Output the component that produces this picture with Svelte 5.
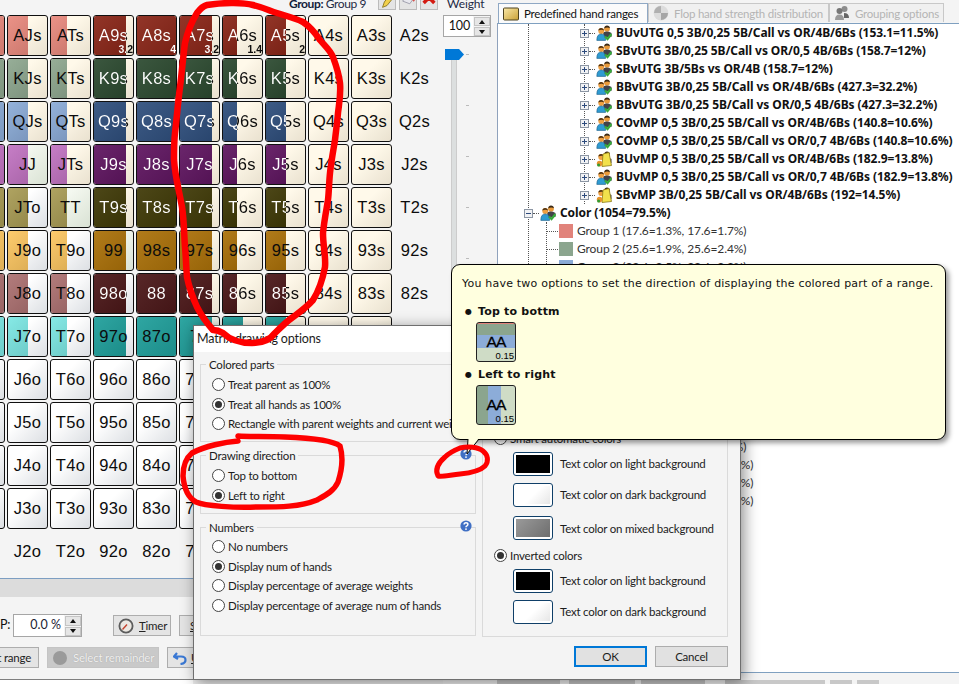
<script>
  const cols = ['Q','J','T','9','8','7','6','5','4','3','2'];
  const rows = ['A','K','Q','J','T','9','8','7','6','5','4','3','2'];
  const order = ['A','K','Q','J','T','9','8','7','6','5','4','3','2'];
  const rowColor = {
    A: ['#e98a7e', '#8a2618'],
    K: ['#8fa890', '#2c4a30'],
    Q: ['#8cacd8', '#2f4f7d'],
    J: ['#c274c2', '#5f1560'],
    T: ['#a99c55', '#3f3906'],
    '9': ['#fdc762', '#ab7109'],
    '8': ['#ad7272', '#4b1718'],
    '7': ['#7de8e4', '#1f9f9b']
  };
  const colWidth = { Q: 41, J: 20, T: 16, '9': 32, '8': 41, '7': 32, '6': 14, '5': 20, '4': 0, '3': 0, '2': 0 };
  const subs = { A9: '3.2', A8: '4', A7: '3.2', A6: '1.4', A5: '2' };

  function cellOf(r, c) {
    const ri = order.indexOf(r), ci = order.indexOf(c);
    const label = c === 'Q' ? '' : ri === ci ? r + c : ri < ci ? r + c + 's' : c + r + 'o';
    const kind = ri === ci ? 'pair' : ri < ci ? 'suited' : 'off';
    const tone = rowColor[r];
    let width = tone ? colWidth[c] : 0;
    if (r === '7' && c === '6') width = 20;
    const darkCol = ['9', '8', '7', '6', '5'].includes(c);
    const color = tone ? (darkCol ? tone[1] : tone[0]) : null;
    const split = color && darkCol && r !== '9' && r !== '7';
    return { label, kind, width, color, split, sub: subs[r + c], plain: r === '2' || c === '2' };
  }
  const cells = rows.flatMap((r) => cols.map((c) => cellOf(r, c)));

  const tree = [
    ['BUvUTG 0,5 3B/0,25 5B/Call vs OR/4B/6Bs (153.1=11.5%)', 0],
    ['SBvUTG 3B/0,25 5B/Call vs OR/0,5 4B/6Bs (158.7=12%)', 0],
    ['SBvUTG 3B/5Bs vs OR/4B (158.7=12%)', 0],
    ['BBvUTG 3B/0,25 5B/Call vs OR/4B/6Bs (427.3=32.2%)', 0],
    ['BBvUTG 3B/0,25 5B/Call vs OR/0,5 4B/6Bs (427.3=32.2%)', 0],
    ['COvMP 0,5 3B/0,25 5B/Call vs OR/4B/6Bs (140.8=10.6%)', 0],
    ['COvMP 0,5 3B/0,25 5B/Call vs OR/0,7 4B/6Bs (140.8=10.6%)', 0],
    ['BUvMP 0,5 3B/0,25 5B/Call vs OR/4B/6Bs (182.9=13.8%)', 1],
    ['BUvMP 0,5 3B/0,25 5B/Call vs OR/0,7 4B/6Bs (182.9=13.8%)', 0],
    ['SBvMP 3B/0,25 5B/Call vs OR/4B/6Bs (192=14.5%)', 1]
  ];
  const groups = [
    ['Group 1 (17.6=1.3%, 17.6=1.7%)', '#e1837b'],
    ['Group 2 (25.6=1.9%, 25.6=2.4%)', '#8ba58e'],
    ['Group 3 (33.6=2.5%, 33.6=3.2%)', '#8cacd8']
  ];
  const tails = ['Group 9 (17.6=1.3%, 17.6=1.7%)', 'Group 10 (25.6=1.9%, 25.6=2.4%)', 'Group 11 (33.6=2.5%, 33.6=3.2%)', 'Group 12 (48.6=3.7%, 48.6=4.6%)'];
  const ticks = [0, 1, 2, 3, 4, 5, 6, 7, 8, 9];
</script>

{#snippet people(yellow)}
  <svg class="ticon" viewBox="0 0 16 16">
    <circle cx="11" cy="3.8" r="2.9" fill="#e99a3a" />
    <path d="M8.2 3.4 Q8.6 .6 11 .6 Q13.6 .6 13.9 3.2 Q11 1.8 8.2 3.4Z" fill="#3a2a18" />
    <path d="M7 7.5 Q11 5.5 15.5 8 L15.5 12 L8 12Z" fill="#43434a" />
    <circle cx="5.2" cy="6" r="2.9" fill="#f0a040" />
    <path d="M2.3 5.6 Q2.6 2.9 5.2 2.9 Q7.8 2.9 8.1 5.4 Q5.2 4.2 2.3 5.6Z" fill="#4a3014" />
    {#if yellow}
      <path d="M7 3 L13 1.5 L15.5 14.5 L6 15.5Z" fill="#f2e14c" stroke="#8c7a18" stroke-width=".8" />
      <circle cx="3.6" cy="12.6" r="2.8" fill="#e8942c" />
      <circle cx="2.6" cy="14" r="1.5" fill="#2e9c34" />
    {:else}
      <path d="M.8 15.4 Q.8 9 5.2 9 Q9.6 9 9.6 15.4Z" fill="#2f9bd2" stroke="#1d5d86" stroke-width=".6" />
      <path d="M9 11.5 L11.5 14 L15.5 9" fill="none" stroke="#39a83c" stroke-width="2.2" />
    {/if}
  </svg>
{/snippet}

{#snippet expander(minus)}
  <span class="exp" class:minus></span>
{/snippet}

{#snippet radio(label, on)}
  <div class="radio"><span class="dot" class:on></span><span>{label}</span></div>
{/snippet}

{#snippet help()}
  <svg class="help" viewBox="0 0 12 12">
    <circle cx="6" cy="6" r="5.6" fill="#3f6fc4" />
    <path d="M4.1 4.6 Q4.1 2.7 6 2.7 Q7.9 2.7 7.9 4.3 Q7.9 5.2 6.9 5.8 Q6 6.3 6 7.2" fill="none" stroke="#fff" stroke-width="1.5" />
    <circle cx="6" cy="9.1" r=".95" fill="#fff" />
  </svg>
{/snippet}

{#snippet swatch(kind)}
  <span class="swatch {kind}"><i></i></span>
{/snippet}

{#snippet colorRow(kind, label)}
  <div class="colorrow">{@render swatch(kind)}<span>{label}</span></div>
{/snippet}

<div class="screen">
  <div class="main">
    <section class="left">
      <div class="toolbar">
        <span class="group"><b>Group:</b> Group 9</span>
        <span class="tbtn">
          <svg viewBox="0 0 18 18"><path d="M4 15 L6 9 L13 0 L17 3 L9 13Z" fill="#f1d04c" stroke="#8a7420" /></svg>
        </span>
        <span class="tbtn">
          <svg viewBox="0 0 18 18"><path d="M3 8 L9 0 L16 4 L11 11Z" fill="#e8e8ee" stroke="#9a9aa8" /><path d="M10 0 L16 8" stroke="#d8524e" stroke-width="2" /></svg>
        </span>
        <span class="tbtn">
          <svg viewBox="0 0 18 18"><path d="M3 -2 L15 10 M15 -2 L3 10" stroke="#d31b12" stroke-width="4" /></svg>
        </span>
      </div>

      <div class="matrix">
        {#each cells as cell}
          <div class="cell {cell.kind}" class:plain={cell.plain}>
            {#if cell.width && !cell.plain}
              <span class="fill" style="width:{cell.width}px;background-color:{cell.color}"></span>
            {/if}
            <span class="name" class:split={cell.split} style={cell.split ? `--w:${cell.width}px` : undefined}>{cell.label}</span>
            {#if cell.sub}<span class="sub split" style="--w:{cell.width}px">{cell.sub}</span>{/if}
          </div>
        {/each}
      </div>

      <div class="band"></div>

      <div class="controls">
        <div class="ctlrow first">
          <span class="plabel">P:</span>
          <span class="spin pct">
            <span class="val">0.0 %</span>
            <span class="arrows"><i class="up"></i><i class="down"></i></span>
          </span>
          <span class="btn timer">
            <svg viewBox="0 0 16 16"><circle cx="8" cy="8" r="6.6" fill="#ece8e2" stroke="#5c5c5c" stroke-width="1.8" /><path d="M4.5 11.5 L9 6.5" stroke="#c4432e" stroke-width="1.4" /></svg>
            <span><u>T</u>imer</span>
          </span>
          <span class="btn next"><u>S</u>ave</span>
        </div>
        <div class="ctlrow second">
          <span class="btn range">Select range</span>
          <span class="btn remainder"><i class="disc"></i><span>Select remainder</span></span>
          <span class="btn undo">
            <svg viewBox="0 0 14 14"><path d="M4 2 L1 5.5 L5 8 M2 5.5 H8 Q12.5 5.5 12.5 9 Q12.5 12.5 7.5 13" fill="none" stroke="#3a78d4" stroke-width="2.2" /></svg>
            <span><u>U</u>ndo</span>
          </span>
        </div>
      </div>
      <div class="foot"></div>
    </section>

    <section class="weight">
      <div class="wlabel">Weight</div>
      <span class="spin wspin">
        <span class="val">100</span>
        <span class="arrows"><i class="up"></i><i class="down"></i></span>
      </span>
      <div class="slider">
        <span class="track"></span>
        <svg class="thumb" viewBox="0 0 19 11"><path d="M0 0 H14 L19 5.5 L14 11 H0Z" fill="#0078d7" /></svg>
        <div class="ticks">
          {#each ticks as t}<i></i>{/each}
        </div>
      </div>
    </section>

    <section class="right">
      <div class="tabs">
        <div class="tab active">
          <svg class="tabicon" viewBox="0 0 16 16"><defs><linearGradient id="fold" x1="0" y1="0" x2="1" y2="1"><stop offset="0" stop-color="#fbe9a8" /><stop offset="1" stop-color="#c9a036" /></linearGradient></defs><rect x=".5" y="2" width="15" height="12" rx="1" fill="url(#fold)" stroke="#4d4220" /></svg>
          Predefined hand ranges
        </div>
        <div class="tab flop">
          <svg class="tabicon" viewBox="0 0 16 16"><circle cx="8" cy="8" r="7.4" fill="#dcdcdc" /><path d="M8 8 L8 1 A7 7 0 0 0 1 8Z" fill="#b0b0b0" /><path d="M8 8 L15 8 A7 7 0 0 1 8 15Z" fill="#a6a6a6" /></svg>
          Flop hand strength distribution
        </div>
        <div class="tab grouping">
          <svg class="tabicon" viewBox="0 0 16 16"><circle cx="10.5" cy="4" r="3" fill="#8c8c8c" /><circle cx="5.5" cy="6" r="3" fill="#777" /><path d="M1 15 Q1 9.5 5.5 9.5 Q10 9.5 10 15Z" fill="#9a9a9a" /><path d="M10 8 Q15 8 15 13 H10Z" fill="#666" /></svg>
          Grouping options
        </div>
      </div>
      <div class="tree">
        <span class="guide g1"></span>
        <span class="guide g2"></span>
        <span class="guide g3"></span>
        {#each tree as [text, yellow]}
          <div class="row lvl3">
            {@render expander(false)}<i class="dash"></i>
            {@render people(yellow === 1)}
            <b>{text}</b>
          </div>
        {/each}
        <div class="row lvl2">
          {@render expander(true)}<i class="dash"></i>
          {@render people(false)}
          <b>Color (1054=79.5%)</b>
        </div>
        {#each groups as [text, color]}
          <div class="row lvl4">
            <i class="dash long"></i>
            <span class="gsw" style="background:{color}"></span>
            <span>{text}</span>
          </div>
        {/each}
        <div class="gap"></div>
        {#each tails as text}
          <div class="row lvl4">
            <i class="dash long"></i>
            <span class="gsw neutral"></span>
            <span>{text}</span>
          </div>
        {/each}
      </div>
      <div class="strip">
        <i></i><i></i><i></i><i></i><i></i><i></i>
      </div>
    </section>
  </div>

  <div class="dialog">
    <div class="title">Matrix drawing options</div>
    <div class="body">
      <div class="columns">
        <div class="col">
          <fieldset class="fs a">
            <legend>Colored parts</legend>
            {@render radio('Treat parent as 100%', false)}
            {@render radio('Treat all hands as 100%', true)}
            {@render radio('Rectangle with parent weights and current weights', false)}
          </fieldset>
          <fieldset class="fs b">
            <legend>Drawing direction</legend>
            <span class="hspot">{@render help()}</span>
            {@render radio('Top to bottom', false)}
            {@render radio('Left to right', true)}
          </fieldset>
          <fieldset class="fs c">
            <legend>Numbers</legend>
            <span class="hspot">{@render help()}</span>
            {@render radio('No numbers', false)}
            {@render radio('Display num of hands', true)}
            {@render radio('Display percentage of average weights', false)}
            {@render radio('Display percentage of average num of hands', false)}
          </fieldset>
        </div>
        <fieldset class="fs colors">
          {@render radio('Smart automatic colors', false)}
          <div class="swrows">
            {@render colorRow('black', 'Text color on light background')}
            {@render colorRow('whitesw', 'Text color on dark background')}
            {@render colorRow('graysw', 'Text color on mixed background')}
          </div>
          {@render radio('Inverted colors', true)}
          <div class="swrows two">
            {@render colorRow('black', 'Text color on light background')}
            {@render colorRow('whitesw', 'Text color on dark background')}
          </div>
        </fieldset>
      </div>
      <div class="actions">
        <span class="dbtn ok">OK</span>
        <span class="dbtn">Cancel</span>
      </div>
    </div>
  </div>

  <div class="tip">
    <p>You have two options to set the direction of displaying the colored part of a range.</p>
    <div class="bullet"><span>●</span><b>Top to bottm</b></div>
    <div class="sample vertical"><em>AA</em><small>0.15</small></div>
    <div class="bullet second"><span>●</span><b>Left to right</b></div>
    <div class="sample horizontal"><em>AA</em><small>0.15</small></div>
    <svg class="tail" viewBox="0 0 16 18">
      <path d="M13 0 L1 16 L2 0Z" fill="#ffffdf" />
      <path d="M2 1 L1 16 L13 1" fill="none" stroke="#000" />
    </svg>
  </div>

  <svg class="scribble" viewBox="0 0 959 684">
    <path d="M207 5 C225 2 245 3 253 5 C265 8 270 11 277 13 C290 17 297 19 303 22 C312 28 316 34 320 40 C326 47 330 50 333 57 C337 68 339 74 340 83 C341 95 339 104 338 113 C337 124 336 131 335 140 C333 152 331 163 330 173 C329 183 329 191 328 200 C326 212 324 222 323 233 C323 246 326 256 325 267 C322 283 318 292 313 300 C306 308 300 312 293 317 C286 322 283 325 275 333 C270 340 262 343 252 343 C240 343 230 340 223 333 C218 330 216 330 213 330 C206 322 201 315 197 307 C192 296 189 287 187 277 C186 266 186 257 185 247 C184 232 184 220 182 207 C179 190 175 176 174 160 C174 150 174 142 175 133 C177 116 178 102 180 87 C182 72 183 57 185 43 C188 30 192 21 197 13 C200 9 203 6 207 5Z" fill="none" stroke="#fe0000" stroke-width="6.5" stroke-linejoin="round" />
    <path d="M238 441 C225 442 205 446 192 453 C186 458 183 467 183 476 C184 488 187 497 196 502 C205 506 235 508 257 507 C280 507 300 507 317 500 C326 495 334 491 338 482 C342 470 343 456 340 446 C333 440 310 438 285 437 C265 436 250 437 238 436" fill="none" stroke="#fe0000" stroke-width="5.5" stroke-linecap="round" />
    <path d="M460 448 C468 446 478 447 483 451 C488 455 489 461 485 466 C480 471 470 473 460 474 C450 475 442 477 438 476 C435 470 438 463 445 457 C450 452 455 450 460 448Z" fill="none" stroke="#fe0000" stroke-width="5" stroke-linejoin="round" />
  </svg>
</div>

<style>
  :global(body) { margin: 0; background: #f4f4f4; }
  .screen {
    position: relative;
    width: 959px;
    height: 684px;
    overflow: hidden;
    background: #f4f4f4;
    font-family: Lato, "Noto Sans", sans-serif;
    color: #111;
  }
  .main { display: flex; height: 684px; }

  /* left */
  .left { width: 443px; flex: none; display: flex; flex-direction: column; height: 684px; overflow: hidden; }
  .toolbar { height: 15px; flex: none; display: flex; align-items: flex-end; padding-left: 289px; position: relative; overflow: hidden; }
  .group { font: 12px/14px Lato, sans-serif; letter-spacing: -.4px; margin-bottom: 4px; width: 89px; flex: none; white-space: nowrap; color: #1e2a44; }
  .group b { color: #12203a; }
  .tbtn { width: 18px; height: 20px; margin-right: 3px; border: 1px solid #bbb; box-sizing: border-box; background: #e4e4e4; flex: none; margin-bottom: 5px; }
  .tbtn svg { width: 16px; height: 16px; display: block; margin-top: 3px; }

  .matrix {
    display: grid;
    grid-template-columns: repeat(11, 41px);
    grid-template-rows: repeat(13, 41px);
    gap: 2px;
    margin-left: -36px;
    width: 471px;
    flex: none;
  }
  .cell {
    position: relative;
    border: 1px solid #101010;
    border-radius: 3px;
    box-sizing: border-box;
    overflow: hidden;
    display: flex;
    align-items: center;
    justify-content: center;
  }
  .cell.suited { background: linear-gradient(135deg, #fff9ea 35%, #e9e1cf); }
  .cell.off { background: linear-gradient(135deg, #ffffff 35%, #dcdfe3); }
  .cell.pair { background: linear-gradient(135deg, #f4f8f0 30%, #d9e2d4); }
  .cell.plain { background: none; border-color: transparent; }
  .fill {
    position: absolute;
    left: 0;
    top: 0;
    bottom: 0;
    background-image: linear-gradient(135deg, rgba(255,255,255,.07), rgba(0,0,0,.12));
  }
  .name {
    position: relative;
    width: 100%;
    text-align: center;
    font: 16.5px/1.1 "Liberation Sans", Arial, sans-serif;
    letter-spacing: .3px;
    color: #0c0c0c;
    white-space: nowrap;
    margin-top: -1px;
  }
  .sub {
    position: absolute;
    left: 0;
    right: 0;
    bottom: 0;
    text-align: right;
    font: bold 10.5px/11px "Liberation Sans", Arial, sans-serif;
  }
  .split {
    background: linear-gradient(90deg, #fff var(--w), #0c0c0c var(--w));
    -webkit-background-clip: text;
    background-clip: text;
    color: transparent;
  }

  .band {
    margin-top: 6px;
    height: 19px;
    box-sizing: border-box;
    border-top: 1px solid #7d9ec2;
    background: #dcdcdc;
    flex: none;
  }
  .controls { display: flex; flex-direction: column; flex: 1; border-bottom: 1px solid #808080; font-size: 11.5px; letter-spacing: -.22px; }
  .ctlrow { display: flex; align-items: flex-start; }
  .ctlrow.first { margin-top: 17px; height: 33px; }
  .ctlrow.second { margin-left: -70px; }
  .plabel { width: 13px; line-height: 21px; flex: none; font-size: 12.5px; }
  .spin { display: inline-flex; border: 1px solid #a6a6a6; box-sizing: border-box; background: #fff; }
  .spin .val { flex: 1; text-align: right; font-size: 12.5px; letter-spacing: 0; }
  .arrows { display: flex; flex-direction: column; gap: 1px; background: #f4f4f4; padding: 1px 0 0 1px; width: 17px; box-sizing: border-box; }
  .arrows i { flex: 1; background: #e6e6e6; border: 1px solid #c4c4c4; position: relative; }
  .arrows i::after {
    content: "";
    position: absolute;
    left: 50%;
    top: 50%;
    margin: -2px 0 0 -3.5px;
    border-left: 3.5px solid transparent;
    border-right: 3.5px solid transparent;
  }
  .arrows .up::after { border-bottom: 4px solid #111; }
  .arrows .down::after { border-top: 4px solid #111; }
  .pct { width: 69px; height: 23px; flex: none; }
  .pct .val { line-height: 20px; padding-right: 3px; color: #223; }
  .btn {
    display: inline-flex;
    align-items: center;
    height: 21px;
    box-sizing: border-box;
    border: 1px solid #adadad;
    background: #e4e4e4;
    flex: none;
    white-space: nowrap;
    color: #222;
  }
  .timer { width: 58px; margin-left: 31px; margin-top: 1px; padding-left: 4px; gap: 5px; }
  .timer svg { width: 16px; height: 16px; }
  .next { width: 60px; margin-left: 8px; margin-top: 1px; padding-left: 10px; }
  .range { width: 109px; justify-content: flex-end; padding-right: 7px; color: #222; }
  .remainder { width: 112px; margin-left: 8px; background: #c9c9c9; border-color: #c4c4c4; color: #f0f0f0; padding-left: 5px; gap: 6px; text-shadow: 0 0 1px #999; }
  .disc { width: 14px; height: 14px; border-radius: 50%; background: #9a9a9a; flex: none; }
  .undo { width: 70px; margin-left: 8px; padding-left: 5px; gap: 4px; }
  .undo svg { width: 14px; height: 14px; }
  .foot { height: 4px; flex: none; background: linear-gradient(90deg, #fff 193px, #efefef 193px); }

  /* weight */
  .weight { width: 54px; flex: none; position: relative; font-size: 12.5px; }
  .wlabel { height: 15px; margin-left: 4px; line-height: 8px; color: #1e2a44; font-size: 12px; letter-spacing: -.1px; }
  .wspin { width: 48px; height: 22px; }
  .wspin .val { line-height: 20px; text-align: center; padding-left: 2px; }
  .slider { position: relative; margin-top: 12px; }
  .track { position: absolute; left: 8px; top: 0; width: 4px; height: 620px; background: #dcdfdf; border-left: 1px solid #ccc; border-right: 1px solid #ccc; box-sizing: content-box; }
  .thumb { position: relative; width: 19px; height: 11px; margin-left: 2px; display: block; }
  .ticks { position: absolute; left: 23px; top: 5px; display: flex; flex-direction: column; gap: 50px; }
  .ticks i { width: 3px; height: 1px; background: #bbb; display: block; }

  /* right */
  .right { flex: 1; display: flex; flex-direction: column; min-width: 0; }
  .tabs { display: flex; height: 23px; flex: none; margin-left: 1px; box-sizing: border-box; align-items: flex-end; font-size: 11.5px; letter-spacing: -.22px; position: relative; z-index: 1; }
  .tab { display: flex; align-items: center; gap: 5px; height: 19px; box-sizing: border-box; border: 1px solid #c8c8c8; border-bottom: 0; padding-left: 4px; color: #b4b4b4; background: #f0f0f0; white-space: nowrap; margin-bottom: 1px; overflow: hidden; }
  .tab.active { height: 20px; width: 150px; color: #111; background: #fbfbfb; border-color: #8fa8c4; margin-bottom: 0; }
  .tab.flop { width: 181px; }
  .tab.grouping { width: 115px; }
  .tabicon { width: 16px; height: 16px; flex: none; }
  .tree {
    position: relative;
    flex: none;
    height: 650px;
    box-sizing: border-box;
    background: #fff;
    border-left: 1px solid #8fa2bc;
    border-top: 1px solid #7fa0c0;
    border-bottom: 1px solid #7fa0c0;
    font-size: 12px;
    letter-spacing: -.1px;
    overflow: hidden;
    color: #111;
  }
  .guide { position: absolute; top: 0; bottom: 0; border-left: 1px dotted #555; width: 0; }
  .g1 { left: 30px; }
  .g2 { left: 86px; height: 180px; bottom: auto; }
  .g3 { left: 48px; top: 198px; }
  .row { height: 18px; display: flex; align-items: center; white-space: nowrap; position: relative; }
  .row b { font: 700 12px "Noto Sans", sans-serif; margin-left: 4px; letter-spacing: -.08px; padding-bottom: 2px; }
  .lvl3 { padding-left: 82px; }
  .lvl2 { padding-left: 26px; }
  .lvl4 { padding-left: 49px; }
  .lvl4 span:last-child { margin-left: 4px; color: #333; padding-bottom: 2px; }
  .exp { width: 9px; height: 9px; box-sizing: border-box; border: 1px solid #8c96a4; background: #f1f2f4; position: relative; flex: none; }
  .exp::before { content: ""; position: absolute; left: 1px; right: 1px; top: 3px; height: 1px; background: #2c4a7c; }
  .exp::after { content: ""; position: absolute; top: 1px; bottom: 1px; left: 3px; width: 1px; background: #2c4a7c; }
  .exp.minus::after { display: none; }
  .dash { width: 6px; border-top: 1px dotted #555; flex: none; margin-right: 1px; }
  .dash.long { width: 11px; margin-right: 1px; }
  .ticon { width: 16px; height: 16px; flex: none; }
  .gsw { width: 14px; height: 14px; flex: none; }
  .gsw.neutral { background: #ccc; }
  .gap { height: 162px; }
  .strip { flex: none; height: 11px; display: flex; align-items: flex-end; }
  .strip i { height: 4px; background: #c8c8c8; display: block; flex: none; }
  .strip i:nth-child(1) { width: 63px; }
  .strip i:nth-child(2) { width: 66px; margin-left: 9px; }
  .strip i:nth-child(3) { width: 64px; margin-left: 6px; }
  .strip i:nth-child(4) { width: 100px; margin-left: 20px; }
  .strip i:nth-child(5) { width: 22px; margin-left: 5px; }
  .strip i:nth-child(6) { width: 22px; margin-left: 5px; }

  /* dialog */
  .dialog {
    position: absolute;
    left: 193px;
    top: 325px;
    width: 548px;
    height: 355px;
    box-sizing: border-box;
    border: 1px solid #6f6f6f;
    background: #f4f4f4;
    box-shadow: 3px 3px 14px rgba(0,0,0,.45);
    display: flex;
    flex-direction: column;
    font-size: 11.5px;
    letter-spacing: -.22px;
    color: #1c1c1c;
  }
  .title { height: 26px; line-height: 25px; background: #fff; padding-left: 3px; font-size: 12.5px; letter-spacing: -.15px; flex: none; }
  .body { flex: 1; display: flex; flex-direction: column; padding: 5px 12px 12px 6px; }
  .columns { display: flex; gap: 6px; height: 280px; }
  .col { width: 276px; display: flex; flex-direction: column; flex: none; }
  .fs { margin: 0; padding: 0; border: 1px solid #dadada; position: relative; box-sizing: border-box; min-width: 0; }
  legend { padding: 0 3px 0 3px; margin-left: 5px; line-height: 14px; font-size: 11.5px; position: relative; top: 1px; }
  .fs.a { height: 85px; padding-top: 4px; }
  .fs.b { height: 66px; margin-top: 6px; padding-top: 3px; }
  .fs.c { height: 116px; margin-top: 6px; padding-top: 3px; }
  .radio { display: flex; align-items: center; height: 20px; padding-left: 11px; gap: 3px; white-space: nowrap; overflow: hidden; }
  .fs.a .radio { height: 19.5px; }
  .fs.c .radio { height: 19.6px; }
  .dot { width: 13px; height: 13px; border: 1px solid #444; border-radius: 50%; background: #fff; box-sizing: border-box; position: relative; flex: none; }
  .dot.on::after { content: ""; position: absolute; inset: 2px; background: #333; border-radius: 50%; }
  .hspot { position: absolute; right: 3px; top: -14px; line-height: 0; }
  .help { width: 12px; height: 12px; display: block; }
  .fs.colors { width: 246px; flex: none; padding-top: 73px; height: 283px; margin-top: -3px; }
  .swrows { padding-left: 30px; display: flex; flex-direction: column; }
  .colorrow { display: flex; align-items: center; gap: 7px; height: 31px; white-space: nowrap; }
  .swrows .colorrow:nth-child(3) { height: 35px; padding-top: 1px; box-sizing: border-box; }
  .swatch { width: 40px; height: 24px; border: 1px solid #0f3f68; border-radius: 3px; box-sizing: border-box; padding: 2px; background: #fff; flex: none; display: block; }
  .swatch i { display: block; width: 100%; height: 100%; }
  .swatch.black i { background: #000; }
  .swatch.whitesw i { background: linear-gradient(135deg, #fff 50%, #e6e6e6); }
  .swatch.graysw i { background: linear-gradient(135deg, #9a9a9a, #6e6e6e); }
  .actions { margin-top: auto; display: flex; justify-content: flex-end; gap: 8px; }
  .dbtn { width: 73px; height: 21px; box-sizing: border-box; border: 1px solid #adadad; background: #e1e1e1; display: flex; align-items: center; justify-content: center; font-size: 11.5px; }
  .dbtn.ok { border: 2px solid #0078d7; }

  /* tooltip */
  .tip {
    position: absolute;
    left: 451px;
    top: 264px;
    width: 495px;
    height: 176px;
    box-sizing: border-box;
    background: #ffffdf;
    border: 1px solid #000;
    border-radius: 9px;
    box-shadow: 3px 3px 5px rgba(0,0,0,.4);
    padding: 12px 10px;
    font: 11px/14px "DejaVu Sans", Verdana, sans-serif;
    color: #111;
  }
  .tip p { margin: 0; white-space: nowrap; letter-spacing: .21px; }
  .bullet { display: flex; gap: 6px; margin-top: 14px; padding-left: 3px; align-items: center; height: 14px; }
  .bullet span { font-size: 8px; width: 7px; }
  .bullet.second { margin-top: 6px; }
  .bullet b { letter-spacing: .2px; }
  .sample {
    position: relative;
    margin: 3px 0 0 14px;
    width: 40px;
    height: 40px;
    box-sizing: border-box;
    border: 1px solid #222;
    border-radius: 3px;
    overflow: hidden;
    color: #000;
  }
  .sample em { position: absolute; left: 0; right: 0; top: 10px; text-align: center; font: 15.5px/17px "Liberation Sans", Arial, sans-serif; letter-spacing: -.9px; -webkit-text-stroke: .3px #000; }
  .sample small { position: absolute; right: 1px; bottom: 0; font: 9.5px/11px "Liberation Sans", Arial, sans-serif; }
  .vertical { background: linear-gradient(#e1837b 0 1px, #8ba58e 1px 12px, #8cacd8 12px 25px, #cfdcc6 25px); }
  .horizontal { background: linear-gradient(90deg, #8ba58e 0 11px, #8cacd8 11px 24px, #cfdcc6 24px); }
  .tail { position: absolute; left: 14px; top: 173px; width: 16px; height: 18px; overflow: visible; }

  .scribble { position: absolute; left: 0; top: 0; width: 959px; height: 684px; pointer-events: none; }
</style>
